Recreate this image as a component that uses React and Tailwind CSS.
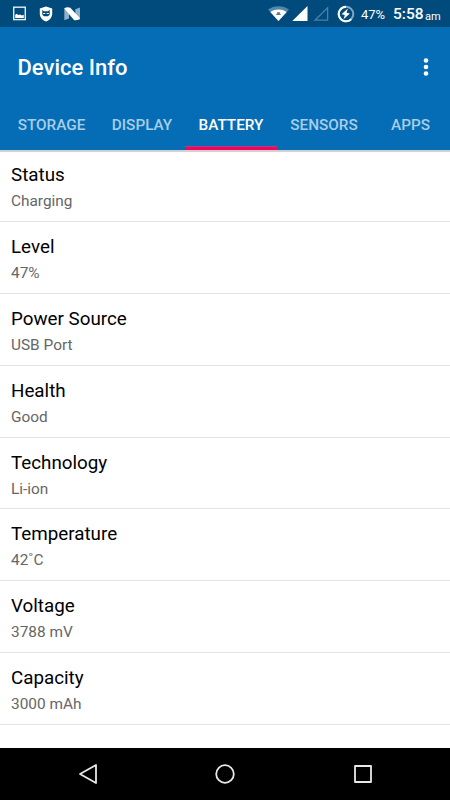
import React, { useState } from 'react';

const tabs = [
  { name: 'STORAGE', width: 'w-[95px]' },
  { name: 'DISPLAY', width: 'w-[86px]' },
  { name: 'BATTERY', width: 'w-[92px]' },
  { name: 'SENSORS', width: 'w-[94px]' },
  { name: 'APPS', width: 'w-[79px]' },
];

const batteryInfo = [
  { title: 'Status', value: 'Charging' },
  { title: 'Level', value: '47%' },
  { title: 'Power Source', value: 'USB Port' },
  { title: 'Health', value: 'Good' },
  { title: 'Technology', value: 'Li-ion' },
  { title: 'Temperature', value: '42˚C' },
  { title: 'Voltage', value: '3788 mV' },
  { title: 'Capacity', value: '3000 mAh' },
];

const StatusBar = () => (
  <div className="h-[27px] shrink-0 bg-[#014b7c] flex items-center justify-between pl-[13px] pr-[9px] text-white">
    <div className="flex items-center">
      <svg width="13" height="15" viewBox="0 0 13 15" fill="none">
        <rect x="0.7" y="1.2" width="11.600" height="12.400" stroke="#e6eef4" strokeWidth="1.4" />
        <path d="M2.200 12V8.800l1.500-1 1.500 1.200L7 8.400l2 1 1.800-.6V12z" fill="#fff" />
      </svg>
      <svg className="ml-[13px]" width="14" height="16" viewBox="0 0 14 16">
        <path d="M7 .6l6.200 2v5c0 3.800-2.500 6.700-6.200 8-3.700-1.300-6.200-4.200-6.200-8v-5z" fill="#fff" />
        <path d="M3.300 3.800l1.700 1.400h4l1.700-1.400v4.900L9 10.300H5L3.300 8.700z" fill="#014b7c" />
        <path d="M4.200 7h2.100v1H4.200zM7.700 7h2.100v1H7.700z" fill="#fff" />
      </svg>
      <svg className="ml-[11px]" width="17" height="14" viewBox="0 0 17 14">
        <path d="M.3 1.200L5 .8v10.700L.3 13.300z" fill="#8fb0c8" />
        <path d="M11.300 2.200L16 .4v12l-4.700.9z" fill="#8fb0c8" />
        <path d="M.3 1.500Q2.800-.6 6.300.8L16 11.300q-2.300 2.700-6 1.800z" fill="#fff" />
      </svg>
    </div>
    <div className="flex items-center">
      <svg width="21" height="15" viewBox="0 0 21 15">
        <path d="M0 3.500C6-1 15-1 21 3.500L10.500 15z" fill="#5388aa" />
        <path d="M2.300 6C7 2.700 14 2.700 18.700 6l-8.200 9z" fill="#fff" />
        <path d="M8.300 9V7.700h.8V6.200h2.800v1.500h.8V9z" fill="#6e7478" />
      </svg>
      <svg className="ml-[3px]" width="16" height="15" viewBox="0 0 16 15">
        <path d="M15.500 0v15H.3z" fill="#fff" />
      </svg>
      <svg className="ml-[5px]" width="16" height="15" viewBox="0 0 16 15">
        <path d="M14.600 1.700v12.500H2z" fill="none" stroke="#4682a8" strokeWidth="1.3" />
      </svg>
      <svg className="ml-2" width="18" height="18" viewBox="0 0 18 18">
        <circle cx="9" cy="9" r="7.300" fill="none" stroke="#7fa7c2" strokeWidth="2" />
        <path d="M9 1.700a7.300 7.300 0 1 0 5.200 12.500" fill="none" stroke="#fff" strokeWidth="2" />
        <path d="M10.800 3.600L4.600 9.300l3.200.7-1.200 4.200 6.300-5.700-3.300-.7z" fill="#fff" />
      </svg>
      <span className="ml-1.5 w-[25px] mt-[2px] text-[13px] leading-none">47%</span>
      <span className="ml-[7px] w-[31px] mt-[2px] text-[15.500px] leading-none font-medium">5:58</span>
      <span className="ml-px w-[16px] mt-[5px] text-[11px] leading-none">am</span>
    </div>
  </div>
);

const App = () => {
  const [active, setActive] = useState('BATTERY');

  return (
    <div className="w-[450px] h-[800px] flex flex-col overflow-hidden bg-white font-[Roboto,sans-serif]">
      <StatusBar />

      <header className="h-[123px] shrink-0 flex flex-col bg-[#046db5] text-white">
        <div className="h-[73px] pt-[8px] pl-[17.500px] pr-[20px] flex items-center justify-between">
          <h1 className="text-[22px] font-medium">Device Info</h1>
          <svg className="-mt-px" width="8" height="20" viewBox="0 0 8 20" fill="#fff">
            <circle cx="4" cy="3.500" r="2.300" />
            <circle cx="4" cy="10" r="2.300" />
            <circle cx="4" cy="16.500" r="2.300" />
          </svg>
        </div>
        <nav className="flex-1 flex pl-1">
          {tabs.map((tab) => (
            <button
              key={tab.name}
              type="button"
              onClick={() => setActive(tab.name)}
              className={`${tab.width} shrink-0 border-b-3 pt-[4px] text-[15.300px] font-medium ${
                active === tab.name
                  ? 'border-[#f9005a] text-white shadow-[inset_0_-1px_0_#a3438c]'
                  : 'border-transparent text-[#a9cde7]'
              }`}
            >
              {tab.name}
            </button>
          ))}
        </nav>
      </header>

      <main className="flex-1 bg-white shadow-[inset_0_3px_1px_-1px_#cfcfcf]">
        {batteryInfo.map((item) => (
          <div key={item.title} className="h-[71.900px] pl-[11px] pt-[12px] border-b border-[#e3e3e3]">
            <div className="text-[18.800px] leading-[26px] text-black">{item.title}</div>
            <div className="text-[15.400px] leading-[26px] text-[#666]">{item.value}</div>
          </div>
        ))}
      </main>

      <footer className="h-[52px] shrink-0 bg-black flex items-center justify-between pl-[78px] pr-[77px]">
        <svg width="20" height="22" viewBox="0 0 20 22" fill="none" stroke="#e8e8e8" strokeWidth="1.8" strokeLinejoin="round">
          <path d="M18 2v18L2 11z" />
        </svg>
        <svg className="-ml-px" width="22" height="22" viewBox="0 0 22 22" fill="none" stroke="#e8e8e8" strokeWidth="1.8">
          <circle cx="11" cy="11" r="8.800" />
        </svg>
        <svg width="20" height="20" viewBox="0 0 20 20" fill="none" stroke="#e8e8e8" strokeWidth="1.8" strokeLinejoin="round">
          <rect x="2" y="2" width="16" height="16" />
        </svg>
      </footer>
    </div>
  );
};

export default App;
